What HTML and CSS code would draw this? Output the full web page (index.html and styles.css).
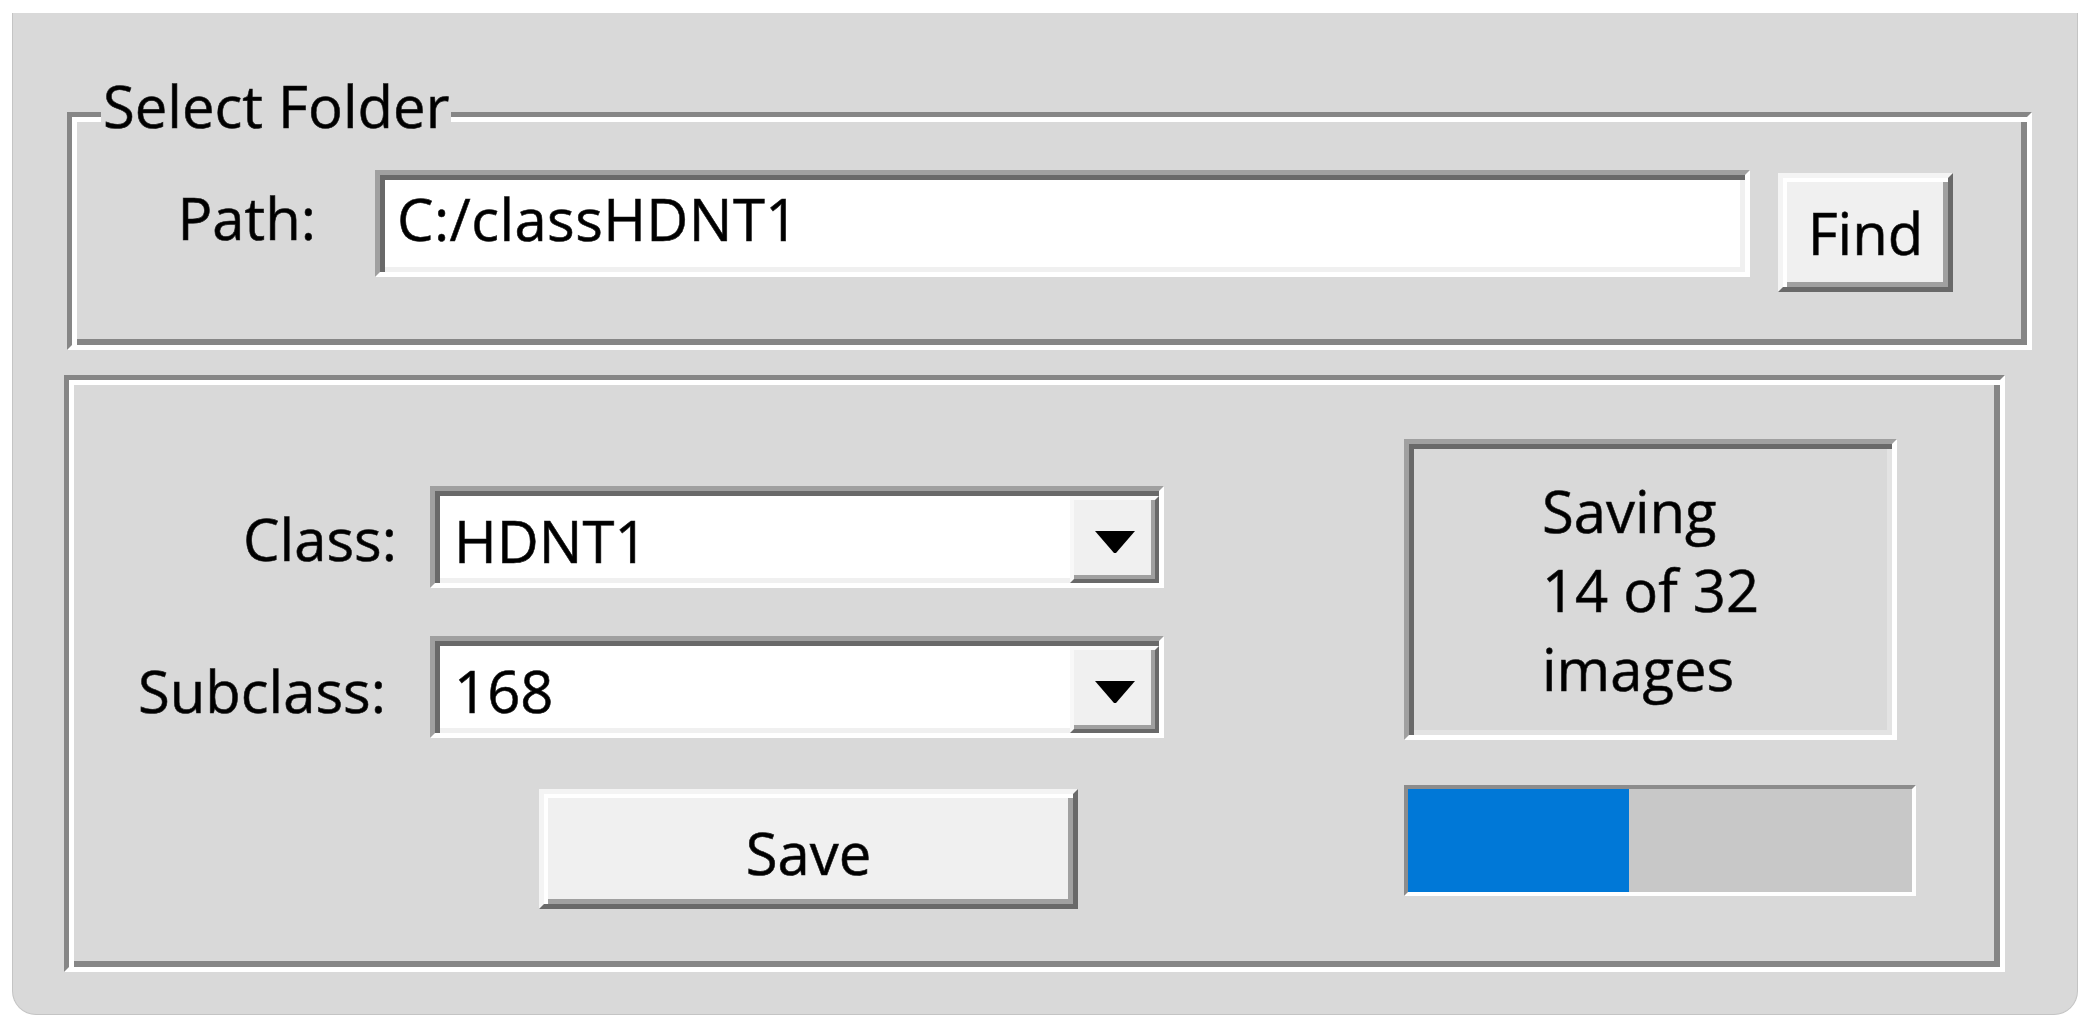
FILE: index.html
```html
<!DOCTYPE html>
<html>
<head>
<meta charset="utf-8">
<title>Save Images</title>
<link rel="stylesheet" href="styles.css">
</head>
<body>
<div class="window">
  <div class="group group-folder">
    <span class="legend">Select Folder</span>
    <div class="path-row">
      <span class="lbl path-lbl">Path:</span>
      <div class="entry">C:/classHDNT1</div>
      <button class="btn find-btn">Find</button>
    </div>
  </div>
  <div class="group group-main">
    <div class="form">
      <span class="lbl class-lbl">Class:</span>
      <div class="combo">
        <span class="combo-value">HDNT1</span>
        <span class="combo-arrow"><svg width="40" height="22" viewBox="0 0 40 22"><polygon points="0,0 40,0 21,22 19,22" fill="#000"/></svg></span>
      </div>
      <span class="lbl sub-lbl">Subclass:</span>
      <div class="combo">
        <span class="combo-value">168</span>
        <span class="combo-arrow"><svg width="40" height="22" viewBox="0 0 40 22"><polygon points="0,0 40,0 21,22 19,22" fill="#000"/></svg></span>
      </div>
      <button class="btn save-btn">Save</button>
    </div>
    <div class="status-col">
      <div class="status"><div class="status-text">Saving<br>14 of 32<br>images</div></div>
      <div class="progress"><div class="progress-fill" style="width:43.75%"></div></div>
    </div>
  </div>
</div>
</body>
</html>
```
FILE: styles.css
```css
* { box-sizing: border-box; }
html, body { margin: 0; background: #ffffff; }
body {
  font-family: "Open Sans", "Noto Sans", sans-serif;
  font-size: 58px;
  color: #000;
  -webkit-text-stroke: 0.6px #1a1a1a;
}
.window {
  margin: 13px 0 0 12px;
  width: 2066px;
  height: 1002px;
  background: #d9d9d9;
  border: 1px solid #c4c4c4;
  border-top: none;
  border-radius: 0 0 24px 24px;
  padding: 99px 0 0 51px;
  display: flex;
  flex-direction: column;
  align-items: flex-start;
}
.group {
  border: 5px solid;
  border-color: #868686 #ffffff #ffffff #868686;
  box-shadow: inset 5px 5px 0 #ffffff, inset -6px -6px 0 #868686;
}
.group-folder {
  margin-left: 3px;
  width: 1965px;
  height: 238px;
}
.legend {
  display: block;
  width: max-content;
  margin: -51px 0 0 29px;
  padding: 0 2px;
  background: #d9d9d9;
}
.path-row {
  display: flex;
  align-items: flex-start;
  margin-top: 25px;
}
.lbl { white-space: nowrap; }
.path-lbl {
  width: 244px;
  text-align: right;
  line-height: 95px;
}
.entry {
  margin-left: 59px;
  width: 1375px;
  height: 107px;
  background: #ffffff;
  border: 5px solid;
  border-color: #a0a0a0 #ffffff #ffffff #a0a0a0;
  box-shadow: inset 5px 5px 0 #696969, inset -5px -5px 0 #f0f0f0;
  padding-left: 17px;
  line-height: 87px;
  letter-spacing: 0.4px;
}
.btn {
  font: inherit;
  color: #000;
  background: #f0f0f0;
  border: 5px solid;
  border-color: #f4f4f4 #696969 #696969 #f4f4f4;
  box-shadow: inset 4px 4px 0 #ffffff, inset -5px -5px 0 #a0a0a0;
  padding: 0;
  margin: 0;
}
.find-btn {
  margin-left: 28px;
  margin-top: 3px;
  width: 175px;
  height: 119px;
}
.group-main {
  margin-top: 25px;
  width: 1941px;
  height: 597px;
  display: flex;
  align-items: flex-start;
}
.form {
  padding-top: 106px;
  display: grid;
  grid-template-columns: 328px 734px;
  grid-template-rows: 102px 102px auto;
  column-gap: 33px;
  row-gap: 48px;
}
.class-lbl, .sub-lbl {
  text-align: right;
  padding-top: 13px;
}
.sub-lbl { padding-right: 11px; padding-top: 15px; }
.combo {
  display: flex;
  background: #ffffff;
  border: 5px solid;
  border-color: #a0a0a0 #ffffff #ffffff #a0a0a0;
  box-shadow: inset 5px 5px 0 #696969, inset -5px -5px 0 #f0f0f0;
}
.combo-value {
  flex: 1;
  padding: 10px 0 0 19px;
}
.combo-arrow {
  width: 89px;
  margin-top: 5px;
  background: #f0f0f0;
  border: 4px solid;
  border-color: #f8f8f8 #696969 #696969 #f8f8f8;
  box-shadow: inset -4px -4px 0 #a0a0a0;
  display: flex;
  align-items: center;
  justify-content: center;
  padding-top: 4px;
}
.combo-arrow svg { display: block; }
.save-btn {
  grid-column: 2;
  margin-top: 3px;
  margin-left: 109px;
  width: 539px;
  height: 120px;
  padding-top: 7px;
}
.status-col {
  margin-left: 240px;
  padding-top: 59px;
  display: flex;
  flex-direction: column;
}
.status {
  width: 493px;
  height: 301px;
  border: 5px solid;
  border-color: #a0a0a0 #ffffff #ffffff #a0a0a0;
  box-shadow: inset 5px 5px 0 #696969, inset -5px -5px 0 #e3e3e3;
  display: flex;
  align-items: center;
  justify-content: center;
}
.status-text {
  text-align: left;
  line-height: 79px;
}
.progress {
  margin-top: 45px;
  width: 512px;
  height: 111px;
  border: 4px solid;
  border-color: #8c8c8c #ffffff #ffffff #8c8c8c;
  background: #c8c8c8;
}
.progress-fill {
  height: 100%;
  background: #0078d7;
}
```
